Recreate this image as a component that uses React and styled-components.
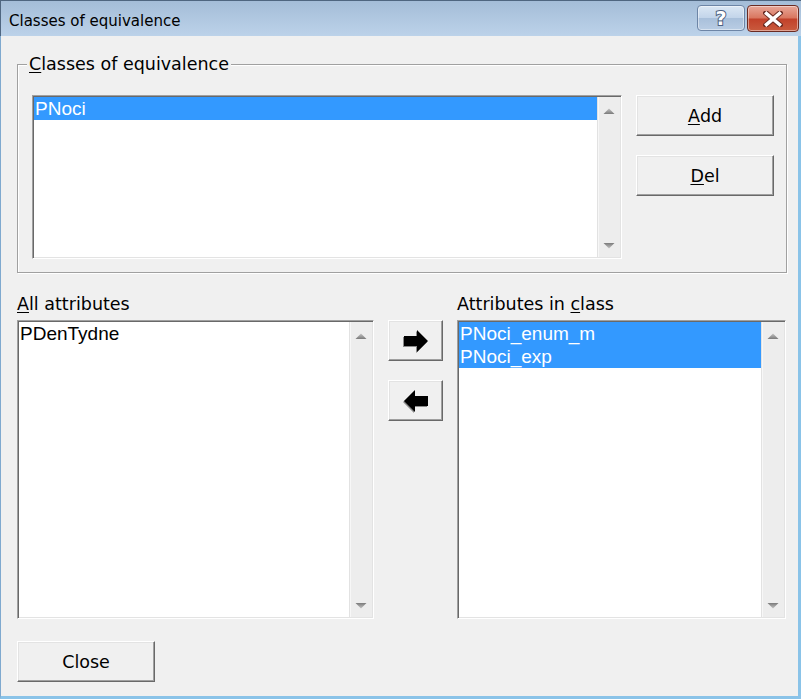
import React from 'react';
import styled, {createGlobalStyle} from 'styled-components';

const GlobalStyle = createGlobalStyle`
    html, body {
        margin: 0;
        padding: 0;
        background: #f0f0f0;
    }
    * {
        box-sizing: border-box;
    }
`;

const UI_FONT = `"DejaVu Sans", Verdana, sans-serif`;
const LIST_FONT = `"Liberation Sans", Arial, sans-serif`;

const Window = styled.div`
    width: 801px;
    height: 699px;
    display: flex;
    flex-direction: column;
    font-family: ${UI_FONT};
    color: #000;
    overflow: hidden;
`;

const TitleBar = styled.div`
    height: 36px;
    flex: none;
    display: flex;
    align-items: flex-start;
    padding: 0 2px 0 8px;
    background: linear-gradient(#a4bdd8, #bcd2e9);
    border-top: 1px solid #4f6680;
    border-left: 1px solid #4f6680;
`;

const Title = styled.div`
    font-size: 15px;
    line-height: 18px;
    margin-top: 11px;
    white-space: nowrap;
`;

const CaptionButtons = styled.div`
    margin-left: auto;
    margin-top: 4px;
    display: flex;
    gap: 2px;
`;

const CaptionButton = styled.div`
    width: ${({$w}) => $w}px;
    height: ${({$h}) => $h}px;
    border-radius: 4px;
    display: flex;
    align-items: center;
    justify-content: center;
    border: 1px solid ${({$close}) => ($close ? '#6b2b22' : '#6d85a6')};
    background: ${({$close}) => ($close
        ? 'linear-gradient(#e8a798 0%, #d9765f 48%, #c2412a 52%, #c95b3e 100%)'
        : 'linear-gradient(#dbe7f4 0%, #c3d5ea 48%, #a9c0db 52%, #b9cde4 100%)')};
    box-shadow: inset 0 0 0 1px rgba(255, 255, 255, 0.45);
`;

const Client = styled.div`
    flex: 1;
    display: flex;
    flex-direction: column;
    align-items: flex-start;
    background: #f0f0f0;
    padding: 18px 11px 0 16px;
    border-left: 1px solid #7fa9cf;
    border-right: 3px solid #8ac3e8;
    border-bottom: 3px solid #8ac3e8;
`;

const Group = styled.fieldset`
    align-self: stretch;
    margin: 0;
    padding: 21px 10px 13px 14px;
    border: 1px solid #a0a0a0;
    box-shadow: inset 1px 1px 0 #fff, 1px 1px 0 #fff;
    display: flex;
    gap: 14px;
    min-width: 0;
`;

const Legend = styled.legend`
    margin-left: -5px;
    padding: 0 2px;
    font-size: 17.5px;
    line-height: 20px;
    background: #f0f0f0;
`;

const Key = styled.span`
    text-decoration: underline;
    text-underline-offset: 2px;
`;

const ButtonColumn = styled.div`
    display: flex;
    flex-direction: column;
    gap: 19px;
`;

const Button = styled.button`
    width: ${({$w}) => $w || 138}px;
    height: 41px;
    padding: 0;
    margin: 0;
    font-family: ${UI_FONT};
    font-size: 17.5px;
    color: #000;
    background: #f0f0f0;
    border: 1px solid;
    border-color: #fff #696969 #696969 #fff;
    box-shadow: inset -1px -1px 0 #a0a0a0, inset 1px 1px 0 #e3e3e3;
    display: flex;
    align-items: center;
    justify-content: center;
    cursor: default;
`;

const ListFrame = styled.div`
    width: ${({$w}) => $w}px;
    height: ${({$h}) => $h}px;
    flex: none;
    display: flex;
    background: #fff;
    border: 1px solid;
    border-color: #a0a0a0 #fff #fff #a0a0a0;
    box-shadow: inset 1px 1px 0 #696969, inset -1px -1px 0 #e3e3e3;
    padding: 1px;
`;

const ListBody = styled.div`
    flex: 1;
    min-width: 0;
`;

const Row = styled.div`
    height: 23px;
    line-height: 23px;
    padding-left: 1px;
    font-family: ${LIST_FONT};
    font-size: 19px;
    white-space: nowrap;
    background: ${({$selected}) => ($selected ? '#3399ff' : 'transparent')};
    color: ${({$selected}) => ($selected ? '#fff' : '#000')};
`;

const ScrollBar = styled.div`
    width: 23px;
    flex: none;
    display: flex;
    flex-direction: column;
    justify-content: space-between;
    align-items: center;
    padding: 11px 0 8px;
    background: #ededed;
    border-left: 1px solid #e2e2e2;
    box-shadow: inset 1px 0 0 #f7f7f7;
`;

const Lower = styled.div`
    align-self: stretch;
    margin-top: 19px;
    display: grid;
    grid-template-columns: 357px 55px 329px;
    grid-template-rows: 22px 299px;
    column-gap: 14px;
    row-gap: 6px;
`;

const Label = styled.div`
    padding-top: 2px;
    font-size: 17.5px;
    line-height: 20px;
    white-space: nowrap;
    grid-column: ${({$col}) => $col};
`;

const ArrowColumn = styled.div`
    grid-column: 2;
    grid-row: 2;
    display: flex;
    flex-direction: column;
    gap: 19px;
`;

const Footer = styled.div`
    margin-top: 22px;
`;

const HelpGlyph = () => (
    <svg width="18" height="20" viewBox="0 0 18 20">
        <text x="9" y="17" textAnchor="middle" fontFamily="DejaVu Sans, sans-serif" fontWeight="bold"
              fontSize="19" fill="#fff" stroke="#4d6180" strokeWidth="2" paintOrder="stroke">?</text>
    </svg>
);

const CloseGlyph = () => (
    <svg width="20" height="16" viewBox="0 0 20 16">
        <path d="M3 2 L17 14 M17 2 L3 14" stroke="#6b2b22" strokeWidth="5.5" strokeLinecap="square"/>
        <path d="M3.5 2.5 L16.5 13.5 M16.5 2.5 L3.5 13.5" stroke="#fff" strokeWidth="3.5" strokeLinecap="square"/>
    </svg>
);

const ScrollArrow = ({down}) => (
    <svg width="12" height="7" viewBox="0 0 12 7">
        <defs>
            <linearGradient id={down ? 'sd' : 'su'} x1="0" y1="0" x2="0" y2="1">
                <stop offset="0" stopColor={down ? '#7a7a7a' : '#c4c4c4'}/>
                <stop offset="1" stopColor={down ? '#c4c4c4' : '#7a7a7a'}/>
            </linearGradient>
        </defs>
        <polygon points={down ? '0.5,1 11.5,1 6,6.5' : '6,0.5 11.5,6 0.5,6'} fill={`url(#${down ? 'sd' : 'su'})`}/>
    </svg>
);

const Arrow = ({left}) => (
    <svg width="26" height="24" viewBox="0 0 26 24" style={left ? {transform: 'scaleX(-1)'} : undefined}>
        <g transform={left ? 'translate(1 1)' : 'translate(-1 1)'}>
            <polygon points="1,7 14,7 14,1 25,12 14,23 14,17 1,17" fill="#8a8a8a"/>
        </g>
        <polygon points="1,7 14,7 14,1 25,12 14,23 14,17 1,17" fill="#000"/>
    </svg>
);

const ListBox = ({items, width, height}) => (
    <ListFrame $w={width} $h={height}>
        <ListBody>
            {items.map((item) => (
                <Row key={item.text} $selected={item.selected}>{item.text}</Row>
            ))}
        </ListBody>
        <ScrollBar>
            <ScrollArrow/>
            <ScrollArrow down/>
        </ScrollBar>
    </ListFrame>
);

export default function App() {
    return (
        <>
            <GlobalStyle/>
            <Window>
                <TitleBar>
                    <Title>Classes of equivalence</Title>
                    <CaptionButtons>
                        <CaptionButton $w={48} $h={26}><HelpGlyph/></CaptionButton>
                        <CaptionButton $w={52} $h={27} $close><CloseGlyph/></CaptionButton>
                    </CaptionButtons>
                </TitleBar>
                <Client>
                    <Group>
                        <Legend><Key>C</Key>lasses of equivalence</Legend>
                        <ListBox width={590} height={164} items={[{text: 'PNoci', selected: true}]}/>
                        <ButtonColumn>
                            <Button><Key>A</Key>dd</Button>
                            <Button><Key>D</Key>el</Button>
                        </ButtonColumn>
                    </Group>
                    <Lower>
                        <Label $col={1}><Key>A</Key>ll attributes</Label>
                        <Label $col={3}>Attributes in <Key>c</Key>lass</Label>
                        <ListBox width={357} height={299} items={[{text: 'PDenTydne'}]}/>
                        <ArrowColumn>
                            <Button $w={55}><Arrow/></Button>
                            <Button $w={55}><Arrow left/></Button>
                        </ArrowColumn>
                        <ListBox width={329} height={299} items={[
                            {text: 'PNoci_enum_m', selected: true},
                            {text: 'PNoci_exp', selected: true},
                        ]}/>
                    </Lower>
                    <Footer>
                        <Button>Close</Button>
                    </Footer>
                </Client>
            </Window>
        </>
    );
}
